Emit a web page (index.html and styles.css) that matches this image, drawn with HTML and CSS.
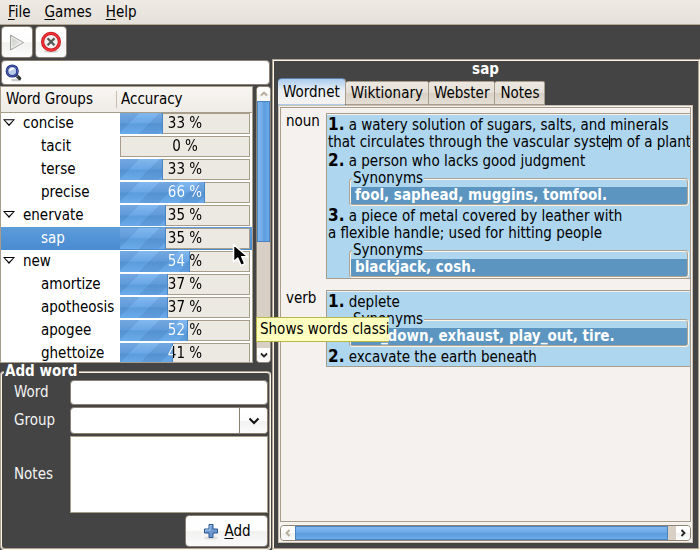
FILE: index.html
```html
<!DOCTYPE html>
<html lang="en">
<head>
<meta charset="utf-8">
<title>Word Groups</title>
<link rel="stylesheet" href="styles.css">
</head>
<body>
<nav class="menubar">
  <a href="#file"><u>F</u>ile</a>
  <a href="#games"><u>G</u>ames</a>
  <a href="#help"><u>H</u>elp</a>
</nav>
<div class="toolbar">
  <button class="tool" type="button" aria-label="Play" disabled>
    <svg width="22" height="22" viewBox="0 0 22 22"><defs><linearGradient id="pl" x1="0" y1="0" x2="1" y2="1"><stop offset="0" stop-color="#c4c8c2"/><stop offset="1" stop-color="#f2f4f0"/></linearGradient></defs><path d="M4.500 4v15l13-7.500z" fill="url(#pl)" stroke="#a3a3a0" stroke-linejoin="round"/><path d="M5.700 6v11l9.600-5.500z" fill="none" stroke="#fff" stroke-opacity=".6"/></svg>
  </button>
  <button class="tool" type="button" aria-label="Stop">
    <svg width="22" height="22" viewBox="0 0 22 22"><ellipse cx="11" cy="20.200" rx="7" ry="1.400" fill="#ccc"/><circle cx="11" cy="10.800" r="8.400" fill="#f1f1ef" stroke="#c4151b" stroke-width="3.200"/><circle cx="11" cy="10.800" r="8.400" fill="none" stroke="#ef3338" stroke-width="1.800"/><path d="M8.300 8.100l5.400 5.400M13.700 8.100l-5.400 5.400" stroke="#555753" stroke-width="2.200" stroke-linecap="square"/></svg>
  </button>
</div>
<main class="panes">
  <section class="side">
    <div class="search">
      <svg width="18" height="18" viewBox="0 0 18 18"><ellipse cx="11" cy="16" rx="5" ry="1.300" fill="#ccc"/><path d="M11.500 11.500l3.200 3" stroke="#2e3436" stroke-width="3.200" stroke-linecap="round"/><path d="M10.500 10.500l2 2" stroke="#999" stroke-width="1.600"/><circle cx="7.200" cy="7" r="5.300" fill="#b9cbea" stroke="#22307c" stroke-width="2.600"/><circle cx="7.200" cy="7" r="5.300" fill="none" stroke="#5065b8" stroke-width="1"/><path d="M4.200 7.500a3.200 3.200 0 0 1 5.400-2.800z" fill="#fff"/></svg>
      <input type="text" aria-label="Search words">
    </div>
    <div class="tree">
      <div class="tree-view">
        <table>
          <thead><tr><th>Word Groups</th><th>Accuracy</th></tr></thead>
          <tbody>
            <tr class="group"><td><i class="twisty"></i>concise</td><td><div class="bar" style="--v:33%"><span>33 %</span></div></td></tr>
            <tr><td>tacit</td><td><div class="bar empty" style="--v:0%"><span>0 %</span></div></td></tr>
            <tr><td>terse</td><td><div class="bar" style="--v:33%"><span>33 %</span></div></td></tr>
            <tr><td>precise</td><td><div class="bar" style="--v:66%"><span>66 %</span></div></td></tr>
            <tr class="group"><td><i class="twisty"></i>enervate</td><td><div class="bar" style="--v:35%"><span>35 %</span></div></td></tr>
            <tr class="selected"><td>sap</td><td><div class="bar" style="--v:35%"><span>35 %</span></div></td></tr>
            <tr class="group"><td><i class="twisty"></i>new</td><td><div class="bar" style="--v:54%"><span>54 %</span></div></td></tr>
            <tr><td>amortize</td><td><div class="bar" style="--v:37%"><span>37 %</span></div></td></tr>
            <tr><td>apotheosis</td><td><div class="bar" style="--v:37%"><span>37 %</span></div></td></tr>
            <tr><td>apogee</td><td><div class="bar" style="--v:52%"><span>52 %</span></div></td></tr>
            <tr><td>ghettoize</td><td><div class="bar" style="--v:41%"><span>41 %</span></div></td></tr>
          </tbody>
        </table>
      </div>
      <div class="scroll vertical">
        <button type="button" aria-label="Scroll up" disabled><svg width="8" height="8" viewBox="0 0 8 8"><path d="M1 5.500l3-3 3 3"/></svg></button>
        <div class="track"><div class="thumb"></div></div>
        <button type="button" aria-label="Scroll down"><svg width="8" height="8" viewBox="0 0 8 8"><path d="M1 2.500l3 3 3-3"/></svg></button>
      </div>
    </div>
    <form class="add">
      <fieldset>
        <legend>Add word</legend>
        <div class="form-grid">
          <label for="word">Word</label>
          <input id="word" class="entry" type="text">
          <label for="group">Group</label>
          <div class="combo">
            <input id="group" type="text">
            <button type="button" aria-label="Choose group"><svg width="12" height="8" viewBox="0 0 12 8"><path d="M1.500 1.500L6 6l4.500-4.500"/></svg></button>
          </div>
          <label for="notes">Notes</label>
          <textarea id="notes"></textarea>
          <button class="add-button" type="button">
            <svg width="18" height="18" viewBox="0 0 18 18"><ellipse cx="9" cy="16" rx="7" ry="1.600" fill="#ddd"/><path d="M7 2.500h4v4.500h4.500v4h-4.500v4.500h-4v-4.500h-4.500v-4h4.500z" fill="#6c9ad0" stroke="#2a5593" stroke-linejoin="round"/><path d="M8 9V3.500h2M3.500 9.500V8H8" fill="none" stroke="#a5c4e8"/></svg>
            <span><u>A</u>dd</span>
          </button>
        </div>
      </fieldset>
    </form>
  </section>

  <section class="detail">
    <h1>sap</h1>
    <div class="tabs" role="tablist">
      <button class="active" type="button" role="tab" aria-selected="true">Wordnet</button>
      <button type="button" role="tab">Wiktionary</button>
      <button type="button" role="tab">Webster</button>
      <button type="button" role="tab">Notes</button>
    </div>
    <div class="page">
      <div class="viewport">
        <div class="senses">
          <h2>noun</h2>
          <div class="box">
            <p><b>1.</b> a watery solution of sugars, salts, and minerals<br>that circulates through the vascular syste<i class="caret"></i>m of a plant</p>
            <p><b>2.</b> a person who lacks good judgment</p>
            <fieldset class="syn"><legend>Synonyms</legend><div>fool, saphead, muggins, tomfool.</div></fieldset>
            <p><b>3.</b> a piece of metal covered by leather with<br>a flexible handle; used for hitting people</p>
            <fieldset class="syn"><legend>Synonyms</legend><div>blackjack, cosh.</div></fieldset>
          </div>
          <h2>verb</h2>
          <div class="box">
            <p><b>1.</b> deplete</p>
            <fieldset class="syn"><legend>Synonyms</legend><div>run_down, exhaust, play_out, tire.</div></fieldset>
            <p><b>2.</b> excavate the earth beneath</p>
          </div>
        </div>
      </div>
      <div class="scroll horizontal">
        <button type="button" aria-label="Scroll left" disabled><svg width="8" height="8" viewBox="0 0 8 8"><path d="M5.500 1l-3 3 3 3"/></svg></button>
        <div class="track"><div class="thumb"></div></div>
        <button type="button" aria-label="Scroll right"><svg width="8" height="8" viewBox="0 0 8 8"><path d="M2.500 1l3 3-3 3"/></svg></button>
      </div>
    </div>
  </section>
</main>
<div class="tooltip" role="tooltip">Shows words classi</div>
<svg class="pointer" width="18" height="26" viewBox="0 0 18 26"><path d="M1.500 1.500v17.500l4.300-3.800 3.200 7.300 4-1.700-3.200-7.100h6z" fill="#000" stroke="#fff" stroke-width="1.600" stroke-linejoin="round"/></svg>
</body>
</html>
```

FILE: styles.css
```css
* { box-sizing: border-box; }

:root {
  --dark: #444;
  --line: #a89c8a;
  --blue: linear-gradient(#82b8ee, #6aa7e6 48%, #5b9cdc 52%, #6cabea);
  --face: linear-gradient(#fff, #fdfdfd 50%, #f1f1f0 52%, #fbfbfb);
}

body {
  margin: 0;
  height: 100vh;
  display: flex;
  flex-direction: column;
  overflow: hidden;
  background: var(--dark);
  color: #000;
  font: 15px/17px "DejaVu Sans Condensed", "DejaVu Sans", sans-serif;
}

button, input, textarea { font: inherit; color: inherit; margin: 0; padding: 0; min-width: 0; }
button, input { border: 0; background: none; }
input:focus, textarea:focus { outline: none; }

.menubar {
  display: flex;
  gap: 14px;
  padding: 4px 8px 3px;
  background: linear-gradient(#eeeae4, #e6e1d9);
  border-bottom: 1px solid #b5a994;
}
.menubar a { color: inherit; text-decoration: none; }
u { text-underline-offset: 2px; }

.toolbar { display: flex; gap: 2px; padding: 1px; }
.tool {
  display: flex;
  align-items: center;
  justify-content: center;
  width: 32px;
  height: 32px;
  border: 1px solid #8a7f72;
  border-radius: 4px;
  background: var(--face);
}

.panes { flex: 1; min-height: 0; display: flex; }
.side { width: 271px; display: flex; flex-direction: column; }

.search {
  display: flex;
  align-items: center;
  height: 25px;
  margin: 1px 1px 0;
  padding: 0 3px;
  border: 1px solid #8a7f72;
  border-radius: 4px;
  background: #fff;
}
.search input { flex: 1; }

.tree { flex: 1; min-height: 0; display: flex; gap: 3px; margin-top: 1px; }
.tree-view {
  flex: 1;
  min-width: 0;
  overflow: hidden;
  border: 1px solid var(--line);
  background: #fff;
}
table { width: 100%; border-collapse: collapse; table-layout: fixed; }
th {
  height: 25px;
  padding: 0 0 0 5px;
  font-weight: normal;
  text-align: left;
  background: linear-gradient(#f8f6f3, #efebe6);
  border-bottom: 1px solid var(--line);
}
th:first-child {
  width: 119px;
  background:
    linear-gradient(#c9bfb0, #c9bfb0) 115px 4px / 1px 17px no-repeat,
    linear-gradient(#f8f6f3, #efebe6);
}
th + th { padding-left: 1px; }
td { height: 23px; padding: 0 0 0 40px; }
td + td { padding: 0 2px 0 0; }
.group td:first-child { padding-left: 2px; }
.twisty { display: inline-block; width: 12px; height: 7px; margin-right: 8px; vertical-align: 2px; position: relative; }
.twisty::before, .twisty::after { content: ""; position: absolute; clip-path: polygon(0 0, 100% 0, 50% 100%); }
.twisty::before { inset: 0; background: #000; }
.twisty::after { inset: 1px 2px 2px; background: #fff; }
.selected td { color: #fff; background: linear-gradient(#5e9cdb, #488bd0); }

.bar {
  height: 21px;
  border: 1px solid var(--line);
  background: #ece9e3;
  position: relative;
}
.bar::before {
  content: "";
  position: absolute;
  inset: -1px auto -1px -1px;
  width: var(--v);
  background:
    repeating-linear-gradient(135deg, #3060a02e 0 14px, #fff0 14px 28px),
    var(--blue);
  box-shadow: 1px 0 #4b86c4;
}
.bar.empty::before { display: none; }
.bar span {
  display: block;
  position: relative;
  line-height: 19px;
  text-align: center;
  color: transparent;
  background: linear-gradient(90deg, #fff var(--v), #000 var(--v));
  -webkit-background-clip: text;
  background-clip: text;
}

.scroll { display: flex; border: 1px solid #8f8474; border-radius: 4px; background: #d8d0c4; overflow: hidden; }
.scroll button { display: flex; align-items: center; justify-content: center; flex: none; width: 14px; height: 14px; background: var(--face); }
.scroll path { fill: none; stroke: #222; stroke-width: 1.8; }
.scroll button:disabled path { stroke: #b5ab9a; }
.scroll .track { flex: 1; display: flex; }
.thumb { border: 1px solid #4b82c0; }
.vertical { flex-direction: column; width: 15px; }
.vertical button { width: 13px; }
.vertical .track { flex-direction: column; }
.vertical .thumb { height: 57%; background: linear-gradient(90deg, #82b8ee, #6aa7e6 48%, #5b9cdc 52%, #6cabea); }
.horizontal { height: 16px; }
.horizontal .thumb { width: 98%; background: var(--blue); }

.add fieldset { margin: 0; padding: 0 1px 1px; border: 2px groove #fff3e2; border-radius: 4px; }
.add legend { margin-left: 1px; padding: 0 1px; color: #fff; font-weight: bold; }
.form-grid { display: grid; grid-template-columns: 56px 1fr; gap: 2px 0; align-items: center; padding-left: 11px; color: #f4f4f4; }
.entry, .combo { height: 25px; border: 1px solid #8a7f72; border-radius: 4px; background: #fff; color: #000; }
.combo { display: flex; height: 27px; overflow: hidden; }
.combo input { flex: 1; }
.combo button { width: 28px; border-left: 1px solid #8a7f72; background: var(--face); }
.combo path { fill: none; stroke: #111; stroke-width: 2; }
textarea { height: 77px; border: 1px solid var(--line); background: #fff; color: #000; resize: none; display: block; }
.add-button {
  grid-column: 2;
  justify-self: end;
  display: flex;
  align-items: center;
  justify-content: center;
  gap: 4px;
  width: 83px;
  height: 32px;
  border: 1px solid #8a7f72;
  border-radius: 4px;
  background: var(--face);
  color: #000;
}

.detail {
  flex: 1;
  min-width: 0;
  display: flex;
  flex-direction: column;
  margin-left: 1px;
  padding: 0 5px 5px 4px;
  border: 2px groove #fff3e2;
}
h1 { margin: 0; font-size: 15px; line-height: 17px; color: #fff; text-align: center; }
.tabs { display: flex; align-items: flex-end; height: 27px; }
.tabs button {
  height: 24px;
  padding: 0 5px;
  border: 1px solid var(--line);
  border-left: 0;
  border-radius: 2px 2px 0 0;
  background: linear-gradient(#ece8e1, #e4dfd6 50%, #d8d0c5 52%, #e4ded4);
}
.tabs .active {
  height: 27px;
  padding-top: 2px;
  border-color: #5b7fa8 #a89c8a transparent;
  border-radius: 4px 4px 0 0;
  background: linear-gradient(#a9cbee, #e9f0f5 45%, #f5f2ef);
}
.page {
  flex: 1;
  min-height: 0;
  display: flex;
  flex-direction: column;
  gap: 3px;
  padding: 1px;
  border: 1px solid #c9c0b1;
  background: #f4f1ee;
}
.viewport { flex: 1; min-height: 0; overflow: hidden; border: 1px solid var(--line); }
.senses { display: grid; grid-template-columns: 40px 1fr; row-gap: 11px; padding: 5px 0 0 5px; white-space: nowrap; }
h2 { margin: 0; font-size: 15px; line-height: 17px; font-weight: normal; }
.box {
  min-width: 0;
  padding: 1px 0 0 1px;
  border: 1px solid var(--line);
  border-right: 0;
  background: #aed6ef;
  box-shadow: inset 0 1px #f4f1ee;
}
.box p { margin: 0; }
.box b { font-size: 17px; line-height: 19px; }
.caret { display: inline-block; width: 1px; height: 15px; margin-right: -1px; background: #000; vertical-align: -3px; }
.syn { min-width: 0; margin: 0 1px 0 21px; padding: 0; border: 2px groove #fff3e2; border-radius: 4px; }
.syn legend { margin-left: 1px; padding: 0 1px; }
.syn div { padding-left: 4px; background: #5c96c0; color: #fff; font-weight: bold; }

.tooltip {
  position: absolute;
  left: 256px;
  top: 317px;
  padding: 3px 0 3px 3px;
  border: 1px solid #b8b84a;
  border-right: 0;
  background: #ffffbf;
}
.pointer { position: absolute; left: 232px; top: 243px; }
```
